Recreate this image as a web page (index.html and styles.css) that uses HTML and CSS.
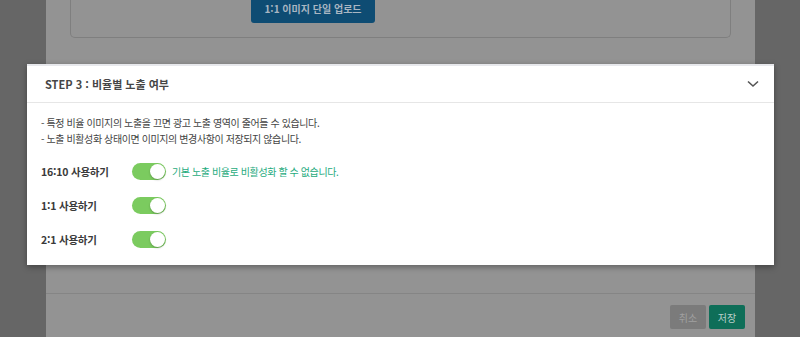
FILE: index.html
```html
<!DOCTYPE html>
<html lang="ko">
<head>
  <meta charset="UTF-8" />
  <title>이미지 비율 설정</title>
  <link rel="stylesheet" href="styles.css">
</head>
<body>

<div class="modal">
  <div class="modal-body">
    <div class="upload-box">
      <button class="btn-upload">1:1 이미지 단일 업로드</button>
    </div>
  </div>
  <div class="modal-footer">
    <button class="btn btn-cancel">취소</button>
    <button class="btn btn-save">저장</button>
  </div>
</div>

<!-- 강조된 STEP 3 카드 -->
<section class="step-card">
  <div class="step-head">
    <h3>STEP 3 : 비율별 노출 여부</h3>
    <svg class="chevron" width="12" height="8" viewBox="0 0 12 8">
      <path d="M1 1.5 L6 6 L11 1.5" fill="none" stroke="#555" stroke-width="1.6" />
    </svg>
  </div>
  <div class="step-body">
    <p class="notice">- 특정 비율 이미지의 노출을 끄면 광고 노출 영역이 줄어들 수 있습니다.</p>
    <p class="notice">- 노출 비활성화 상태이면 이미지의 변경사항이 저장되지 않습니다.</p>

    <div class="ratio-row first">
      <span class="ratio-label">16:10 사용하기</span>
      <span class="toggle on"></span>
      <span class="ratio-help">기본 노출 비율로 비활성화 할 수 없습니다.</span>
    </div>
    <div class="ratio-row">
      <span class="ratio-label">1:1 사용하기</span>
      <span class="toggle on"></span>
    </div>
    <div class="ratio-row">
      <span class="ratio-label">2:1 사용하기</span>
      <span class="toggle on"></span>
    </div>
  </div>
</section>

</body>
</html>
```

FILE: styles.css
```css
* {
  box-sizing: border-box;
}
body {
  margin: 0;
  height: 337px;
  overflow: hidden;
  background-color: #666;
  font-family: "Noto Sans CJK KR", "Noto Sans", sans-serif;
  color: #333;
}
button {
  font-family: inherit;
  border: none;
}

/* 뒤쪽 모달 (딤 처리됨) */
.modal {
  margin-left: 46px;
  width: 709px;
  height: 337px;
  background-color: #939393;
  display: flex;
  flex-direction: column;
}
.modal-body {
  flex: 1;
  padding: 0 24px;
}
.upload-box {
  margin-top: -10px;
  height: 48px;
  border: 1px solid #7f7f7f;
  border-top: none;
  border-radius: 0 0 5px 5px;
  padding-left: 180px;
}
.btn-upload {
  display: block;
  width: 124px;
  height: 33px;
  padding-top: 4px;
  background-color: #0e4c73;
  color: #a9b6c2;
  font-size: 10px;
  font-weight: bold;
  border-radius: 3px;
}
.modal-footer {
  height: 44px;
  border-top: 1px solid #858585;
  display: flex;
  justify-content: flex-end;
  align-items: flex-start;
  gap: 3px;
  padding: 11px 10px 0 0;
}
.btn {
  width: 36px;
  height: 24px;
  font-size: 10px;
  border-radius: 2px;
}
.btn-cancel {
  background-color: #7b7b7b;
  color: #a0a0a0;
}
.btn-save {
  background-color: #0e6e58;
  color: #b9cfc8;
}

/* STEP 3 카드 */
.step-card {
  position: absolute;
  left: 27px;
  top: 64px;
  width: 747px;
  height: 201px;
  background-color: #fff;
  border-top: 2px solid #e7e8ec;
  box-shadow: 0 2px 6px rgba(0,0,0,0.35);
}
.step-head {
  height: 37px;
  display: flex;
  align-items: center;
  justify-content: space-between;
  padding: 0 15px 0 18px;
  border-bottom: 1px solid #e6e6e6;
}
.step-head h3 {
  margin: 0;
  font-size: 11px;
  font-weight: bold;
  color: #464646;
  letter-spacing: 0;
}
.chevron {
  display: block;
}
.step-body {
  padding: 12px 14px 0;
}
.notice {
  margin: 0;
  font-size: 10px;
  line-height: 16px;
  color: #444;
  letter-spacing: -0.4px;
}
.ratio-row {
  display: flex;
  align-items: center;
  height: 34px;
}
.ratio-row.first {
  margin-top: 7px;
}
.ratio-label {
  width: 91px;
  font-size: 10.5px;
  font-weight: bold;
  color: #3a3a3a;
  letter-spacing: -0.2px;
}
.toggle {
  position: relative;
  width: 34px;
  height: 17px;
  border-radius: 9px;
  background-color: #ccc;
}
.toggle.on {
  background-color: #7bcb5f;
}
.toggle::after {
  content: "";
  position: absolute;
  top: 1px;
  left: 1px;
  width: 15px;
  height: 15px;
  border-radius: 50%;
  background-color: #fff;
  box-shadow: 0 1px 2px rgba(0,0,0,0.25);
}
.toggle.on::after {
  left: 18px;
}
.ratio-help {
  margin-left: 6px;
  font-size: 10px;
  color: #1fab80;
  letter-spacing: -0.4px;
}
```
